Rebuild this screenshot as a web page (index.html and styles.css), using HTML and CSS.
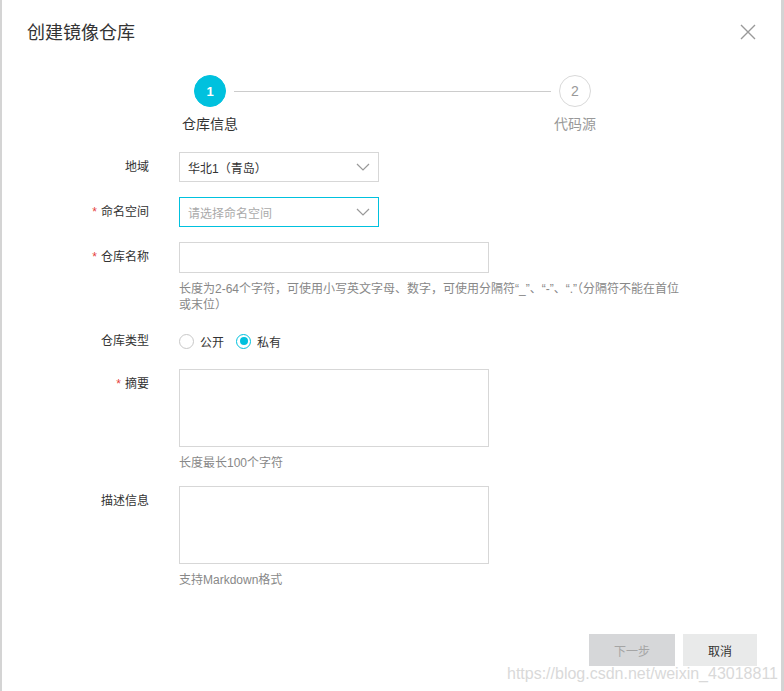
FILE: index.html
```html
<!DOCTYPE html>
<html lang="zh-CN">
<head>
    <meta charset="UTF-8">
    <meta name="viewport" content="width=device-width, initial-scale=1.0">
    <title>创建镜像仓库</title>
    <link rel="stylesheet" href="styles.css">
</head>
<body>
    <div class="dialog">
        <div class="dialog-header">
            <h2 class="dialog-title">创建镜像仓库</h2>
            <button type="button" class="close-btn" aria-label="关闭">
                <svg width="16" height="16" viewBox="0 0 16 16">
                    <path d="M1 1 L15 15 M15 1 L1 15" stroke="#999" stroke-width="1.4" fill="none"/>
                </svg>
            </button>
        </div>

        <div class="steps">
            <div class="step active">
                <div class="step-circle">1</div>
                <div class="step-label">仓库信息</div>
            </div>
            <div class="step-line"></div>
            <div class="step">
                <div class="step-circle">2</div>
                <div class="step-label">代码源</div>
            </div>
        </div>

        <form class="repo-form">
            <div class="form-item">
                <label class="form-label">地域</label>
                <div class="form-control">
                    <div class="select">
                        <span>华北1（青岛）</span>
                        <svg class="select-arrow" width="14" height="8" viewBox="0 0 14 8">
                            <path d="M1 1 L7 7 L13 1" stroke="#999" stroke-width="1.2" fill="none"/>
                        </svg>
                    </div>
                </div>
            </div>

            <div class="form-item">
                <label class="form-label"><span class="required">*</span>命名空间</label>
                <div class="form-control">
                    <div class="select focused">
                        <span class="placeholder">请选择命名空间</span>
                        <svg class="select-arrow" width="14" height="8" viewBox="0 0 14 8">
                            <path d="M1 1 L7 7 L13 1" stroke="#999" stroke-width="1.2" fill="none"/>
                        </svg>
                    </div>
                </div>
            </div>

            <div class="form-item">
                <label class="form-label" for="repo-name"><span class="required">*</span>仓库名称</label>
                <div class="form-control">
                    <input type="text" id="repo-name" class="text-input">
                    <p class="help">长度为2-64个字符，可使用小写英文字母、数字，可使用分隔符“_”、“-”、“.”（分隔符不能在首位<br>或末位）</p>
                </div>
            </div>

            <div class="form-item inline">
                <label class="form-label">仓库类型</label>
                <div class="form-control radios">
                    <label class="radio"><span class="radio-dot"></span>公开</label>
                    <label class="radio checked"><span class="radio-dot"></span>私有</label>
                </div>
            </div>

            <div class="form-item">
                <label class="form-label" for="summary"><span class="required">*</span>摘要</label>
                <div class="form-control">
                    <textarea id="summary" class="text-area"></textarea>
                    <p class="help">长度最长100个字符</p>
                </div>
            </div>

            <div class="form-item">
                <label class="form-label" for="desc">描述信息</label>
                <div class="form-control">
                    <textarea id="desc" class="text-area"></textarea>
                    <p class="help">支持Markdown格式</p>
                </div>
            </div>
        </form>

        <div class="dialog-footer">
            <button type="button" class="btn btn-disabled">下一步</button>
            <button type="button" class="btn btn-normal">取消</button>
        </div>

        <div class="watermark">https://blog.csdn.net/weixin_43018811</div>
    </div>
</body>
</html>
```

FILE: styles.css
```css
:root {
    --primary-color: #00c1de;
    --border-color: #d7d7d7;
    --text-color: #333;
    --muted-color: #999;
}

* {
    box-sizing: border-box;
}

body {
    margin: 0;
    background-color: #d4d4d4;
    font-family: "Liberation Sans", "Noto Sans CJK SC", sans-serif;
    color: var(--text-color);
    font-size: 12px;
}

.dialog {
    position: relative;
    margin-left: 2px;
    width: 779px;
    height: 691px;
    background-color: white;
    display: flex;
    flex-direction: column;
    overflow: hidden;
}

.dialog-header {
    display: flex;
    justify-content: space-between;
    align-items: center;
    padding: 21px 25px 0 25px;
}

.dialog-title {
    margin: 0;
    font-size: 18px;
    font-weight: normal;
    line-height: 24px;
    color: #333;
}

.close-btn {
    border: none;
    background: none;
    padding: 0;
    width: 16px;
    height: 16px;
    cursor: pointer;
    margin-top: -2px;
}

.close-btn svg {
    display: block;
}

.steps {
    display: flex;
    align-items: flex-start;
    margin: 30px 0 0 192px;
    width: 397px;
}

.step {
    width: 32px;
    display: flex;
    flex-direction: column;
    align-items: center;
}

.step-circle {
    width: 32px;
    height: 32px;
    border-radius: 50%;
    border: 1px solid #d9d9d9;
    color: var(--muted-color);
    font-size: 14px;
    display: flex;
    align-items: center;
    justify-content: center;
}

.step.active .step-circle {
    background-color: var(--primary-color);
    border-color: var(--primary-color);
    color: white;
    font-weight: bold;
    font-size: 13px;
}

.step-label {
    margin-top: 7px;
    white-space: nowrap;
    font-size: 14px;
    line-height: 20px;
    color: var(--muted-color);
}

.step.active .step-label {
    color: #333;
}

.step-line {
    flex: 1;
    height: 1px;
    background-color: #ccc;
    margin: 16px 8px 0;
}

.repo-form {
    margin-top: 18px;
}

.form-item {
    display: grid;
    grid-template-columns: 147px 1fr;
    column-gap: 30px;
    margin-bottom: 15px;
}

.form-label {
    text-align: right;
    line-height: 30px;
    color: #333;
}

.form-item.inline .form-label {
    line-height: 26px;
}

.required {
    color: #e5403c;
    margin-right: 4px;
}

.select {
    width: 200px;
    height: 30px;
    border: 1px solid var(--border-color);
    display: flex;
    align-items: center;
    justify-content: space-between;
    padding: 0 8px 0 8px;
    color: #333;
}

.select.focused {
    border-color: var(--primary-color);
}

.placeholder {
    color: #aaa;
}

.text-input {
    display: block;
    width: 310px;
    height: 31px;
    border: 1px solid var(--border-color);
    margin: 0;
}

.text-area {
    display: block;
    width: 310px;
    height: 78px;
    border: 1px solid var(--border-color);
    margin: 0;
    resize: none;
}

.help {
    margin: 8px 0 0;
    line-height: 16px;
    color: #888;
}

.radios {
    display: flex;
    align-items: center;
    height: 26px;
    gap: 12px;
}

.radio {
    display: flex;
    align-items: center;
    gap: 6px;
    color: #333;
}

.radio-dot {
    width: 15px;
    height: 15px;
    border-radius: 50%;
    border: 1px solid #c8c8c8;
    display: flex;
    align-items: center;
    justify-content: center;
}

.radio.checked .radio-dot {
    border-color: var(--primary-color);
}

.radio.checked .radio-dot::after {
    content: "";
    width: 8px;
    height: 8px;
    border-radius: 50%;
    background-color: var(--primary-color);
}

.dialog-footer {
    margin-top: auto;
    display: flex;
    justify-content: flex-end;
    gap: 8px;
    padding: 0 24px 25px 0;
}

.btn {
    height: 32px;
    border: none;
    font-family: inherit;
    font-size: 12px;
    cursor: pointer;
}

.btn-disabled {
    width: 86px;
    background-color: #d6d7d9;
    color: #a5a5a5;
}

.btn-normal {
    width: 74px;
    background-color: #e9eaea;
    color: #333;
}

.watermark {
    position: absolute;
    right: 3px;
    bottom: 8px;
    font-size: 16px;
    font-family: "Liberation Sans", sans-serif;
    color: #d9d9d9;
    white-space: nowrap;
}
```
